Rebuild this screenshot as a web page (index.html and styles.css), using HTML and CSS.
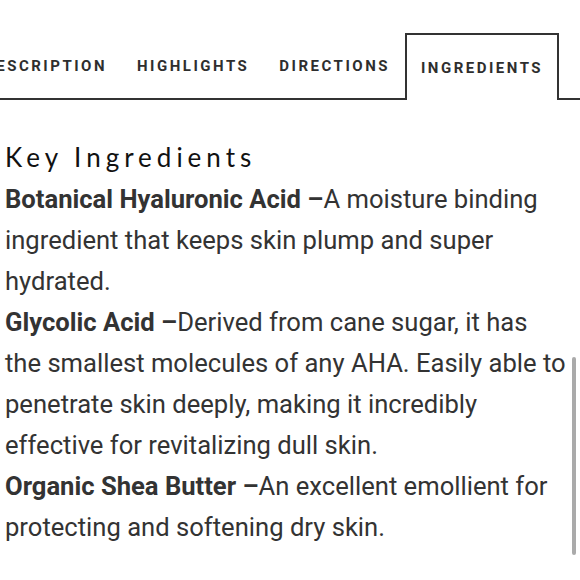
FILE: index.html
```html
<!DOCTYPE html>
<html>
<head>
<meta charset="utf-8">
<link rel="stylesheet" href="styles.css">
</head>
<body>
<div class="page">
  <nav class="tabs">
    <div class="tab">DESCRIPTION</div>
    <div class="tab">HIGHLIGHTS</div>
    <div class="tab">DIRECTIONS</div>
    <div class="tab active">INGREDIENTS</div>
  </nav>
  <section class="content">
    <h2 class="heading">Key Ingredients</h2>
    <p class="item"><b>Botanical Hyaluronic Acid –</b>A moisture binding ingredient that keeps skin plump and super hydrated.</p>
    <p class="item"><b>Glycolic Acid –</b>Derived from cane sugar, it has the smallest molecules of any AHA. Easily able to penetrate skin deeply, making it incredibly effective for revitalizing dull skin.</p>
    <p class="item"><b>Organic Shea Butter –</b>An excellent emollient for protecting and softening dry skin.</p>
  </section>
  <div class="scrollbar"></div>
</div>
</body>
</html>
```
FILE: styles.css
```css
html, body {
  margin: 0;
  padding: 0;
  background: #fff;
  overflow: hidden;
}
.page {
  position: relative;
  width: 580px;
  height: 580px;
  overflow: hidden;
  font-family: Roboto, "Liberation Sans", sans-serif;
  color: #333;
}
.tabs {
  display: flex;
  margin-top: 33px;
  margin-left: -31px;
  border-bottom: 2px solid #333;
  height: 65px;
}
.tab {
  display: flex;
  align-items: center;
  padding: 0 13px 2px 13px;
  border: 2px solid transparent;
  border-bottom: 0;
  font-size: 15px;
  font-weight: 700;
  letter-spacing: 2.5px;
  color: #2e2e2e;
  white-space: nowrap;
}
.tab.active {
  border-color: #333;
  background: #fff;
  margin-bottom: -2px;
  padding: 1px 14px 1px 14px;
}
.content {
  padding: 0 14px 0 5px;
  width: 561px;
}
.heading {
  margin: 40px 0 5px 0;
  font-family: Lato, "Noto Sans", sans-serif;
  font-weight: 400;
  font-size: 26px;
  letter-spacing: 5px;
  line-height: 34px;
  color: #111;
}
.item {
  margin: 0;
  font-size: 25.6px;
  line-height: 41px;
  color: #333;
}
.item b {
  font-weight: 700;
  color: #333;
}
.scrollbar {
  position: absolute;
  right: 4px;
  top: 357px;
  width: 4px;
  height: 198px;
  border-radius: 2px;
  background: #aaa;
}
```
